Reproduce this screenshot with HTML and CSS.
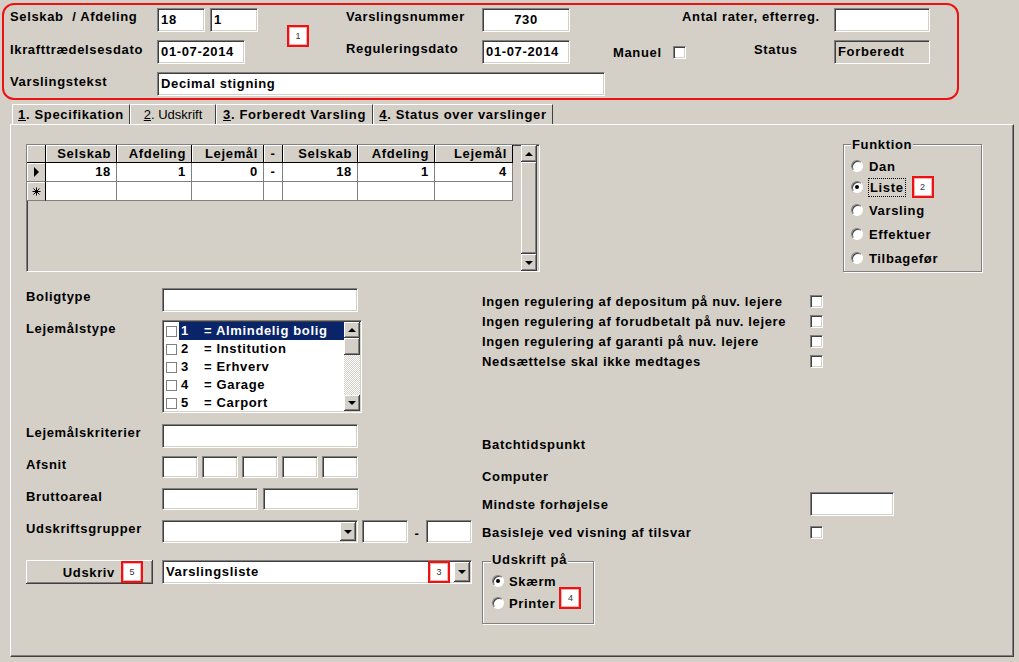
FILE: index.html
```html
<!DOCTYPE html>
<html lang="da">
<head>
<meta charset="utf-8">
<title>Varsling</title>
<link rel="stylesheet" href="styles.css">
</head>
<body>
<div class="window">
  <div class="header">
    <div class="hrow">
      <span class="lbl w147">Selskab&nbsp; / Afdeling</span>
      <span class="inp w48">18</span>
      <span class="inp w48 ml5">1</span>
      <span class="lbl w136 ml88">Varslingsnummer</span>
      <span class="inp w88 center">730</span>
      <span class="lbl w152 ml112">Antal rater, efterreg.</span>
      <span class="inp w96"></span>
    </div>
    <div class="hrow">
      <span class="lbl w147 pt1">Ikrafttrædelsesdato</span>
      <span class="inp w88">01-07-2014</span>
      <span class="lbl w136 ml101">Reguleringsdato</span>
      <span class="inp w88">01-07-2014</span>
      <span class="lbl mid w60 ml43">Manuel</span>
      <span class="chk mid"></span>
      <span class="lbl w80 ml68 pt1">Status</span>
      <span class="inp w96 disabled">Forberedt</span>
    </div>
    <div class="hrow">
      <span class="lbl w147 pt1">Varslingstekst</span>
      <span class="inp w448">Decimal stigning</span>
    </div>
    <span class="badge badge-1">1</span>
  </div>

  <div class="tabs">
    <div class="tab t1"><u>1</u>. Specifikation</div>
    <div class="tab t2"><u>2</u>. Udskrift</div>
    <div class="tab t3"><u>3</u>. Forberedt Varsling</div>
    <div class="tab t4"><u>4</u>. Status over varslinger</div>
  </div>

  <div class="panel">
    <div class="top">
      <div class="grid">
        <div class="table">
          <div class="hc"></div>
          <div class="hc">Selskab</div>
          <div class="hc">Afdeling</div>
          <div class="hc">Lejemål</div>
          <div class="hc ctr">-</div>
          <div class="hc">Selskab</div>
          <div class="hc">Afdeling</div>
          <div class="hc">Lejemål</div>

          <div class="sc"><span class="tri"></span></div>
          <div class="dc">18</div>
          <div class="dc">1</div>
          <div class="dc">0</div>
          <div class="dc ctr">-</div>
          <div class="dc">18</div>
          <div class="dc">1</div>
          <div class="dc">4</div>

          <div class="sc">
            <svg width="9" height="9" viewBox="0 0 9 9"><path d="M4.5 0.5V8.5M0.5 4.5H8.5M1.5 1.5L7.5 7.5M7.5 1.5L1.5 7.5" stroke="#000" stroke-width="1" fill="none"/></svg>
          </div>
          <div class="dc"></div>
          <div class="dc"></div>
          <div class="dc"></div>
          <div class="dc"></div>
          <div class="dc"></div>
          <div class="dc"></div>
          <div class="dc"></div>
        </div>
        <div class="vscroll">
          <div class="sbtn raised"><span class="up"></span></div>
          <div class="thumb raised"></div>
          <div class="sbtn raised"><span class="down"></span></div>
        </div>
      </div>

      <div class="group funktion">
        <span class="legend">Funktion</span>
        <div class="opt h20 first"><span class="radio"></span><span>Dan</span></div>
        <div class="opt h22"><span class="radio tight"></span><span class="focus">Liste</span><span class="badge ml6">2</span></div>
        <div class="opt h24"><span class="radio"></span><span>Varsling</span></div>
        <div class="opt h24"><span class="radio"></span><span>Effektuer</span></div>
        <div class="opt h24"><span class="radio"></span><span>Tilbagefør</span></div>
      </div>
    </div>

    <div class="body">
      <div class="left">
        <div class="frow">
          <span class="flbl">Boligtype</span>
          <span class="inp w196"></span>
        </div>
        <div class="frow mt8">
          <span class="flbl">Lejemålstype</span>
          <div class="listbox">
            <div class="items">
              <div class="item sel"><span class="ibox"></span><span class="itext"><span class="num">1</span>= Almindelig bolig</span></div>
              <div class="item"><span class="ibox"></span><span class="itext"><span class="num">2</span>= Institution</span></div>
              <div class="item"><span class="ibox"></span><span class="itext"><span class="num">3</span>= Erhverv</span></div>
              <div class="item"><span class="ibox"></span><span class="itext"><span class="num">4</span>= Garage</span></div>
              <div class="item"><span class="ibox"></span><span class="itext"><span class="num">5</span>= Carport</span></div>
            </div>
            <div class="lscroll">
              <div class="lbtn raised"><span class="up"></span></div>
              <div class="lthumb raised"></div>
              <div class="track"></div>
              <div class="lbtn raised"><span class="down"></span></div>
            </div>
          </div>
        </div>
        <div class="frow mt11">
          <span class="flbl">Lejemålskriterier</span>
          <span class="inp w196"></span>
        </div>
        <div class="frow mt8">
          <span class="flbl">Afsnit</span>
          <span class="inp h22 w36"></span>
          <span class="inp h22 w36 ml4"></span>
          <span class="inp h22 w36 ml4"></span>
          <span class="inp h22 w36 ml4"></span>
          <span class="inp h22 w36 ml4"></span>
        </div>
        <div class="frow mt10">
          <span class="flbl">Bruttoareal</span>
          <span class="inp h22 w96"></span>
          <span class="inp h22 w96 ml5"></span>
        </div>
        <div class="frow mt10">
          <span class="flbl">Udskriftsgrupper</span>
          <div class="combo w196 h23">
            <span class="ctext"></span>
            <span class="dbtn raised"><span class="down"></span></span>
          </div>
          <span class="inp h23 w46 ml4"></span>
          <span class="dash">-</span>
          <span class="inp h23 w46"></span>
        </div>
        <div class="frow mt17">
          <div class="btn raised"><span>Udskriv</span><span class="badge ml6">5</span></div>
          <div class="combo w310 h24 ml9">
            <span class="ctext">Varslingsliste</span>
            <span class="badge cbadge">3</span>
            <span class="dbtn raised"><span class="down"></span></span>
          </div>
        </div>
      </div>

      <div class="right">
        <div class="crow"><span class="rlbl">Ingen regulering af depositum på nuv. lejere</span><span class="chk"></span></div>
        <div class="crow"><span class="rlbl">Ingen regulering af forudbetalt på nuv. lejere</span><span class="chk"></span></div>
        <div class="crow"><span class="rlbl">Ingen regulering af garanti på nuv. lejere</span><span class="chk"></span></div>
        <div class="crow"><span class="rlbl">Nedsættelse skal ikke medtages</span><span class="chk"></span></div>
        <div class="crow mt63"><span class="rlbl">Batchtidspunkt</span></div>
        <div class="crow mt12"><span class="rlbl">Computer</span></div>
        <div class="crow h24 mt6"><span class="rlbl">Mindste forhøjelse</span><span class="inp w84"></span></div>
        <div class="crow mt6"><span class="rlbl">Basisleje ved visning af tilsvar</span><span class="chk"></span></div>
        <div class="group udskrift">
          <span class="legend">Udskrift på</span>
          <div class="opt h22 first2"><span class="radio on sm"></span><span>Skærm</span></div>
          <div class="opt h22"><span class="radio sm"></span><span>Printer</span><span class="badge b4">4</span></div>
        </div>
      </div>
    </div>
  </div>
</div>
</body>
</html>
```

FILE: styles.css
```css
* { box-sizing: border-box; }
html, body { margin: 0; }
body {
  background: #d4d0c8;
  font-family: "Liberation Sans", Arial, sans-serif;
  font-size: 13px;
  font-weight: bold;
  letter-spacing: .65px;
  color: #000;
}
.window { width: 1019px; height: 662px; overflow: hidden; padding-top: 3px; }

/* header */
.header {
  position: relative;
  margin-left: 2px;
  width: 957px;
  height: 97px;
  border: 2px solid #ee1111;
  border-radius: 12px;
  padding: 3px 0 0 6px;
  display: flex;
  flex-direction: column;
  gap: 8px;
}
.hrow { display: flex; align-items: flex-start; height: 24px; }
.lbl { flex: none; line-height: 17px; white-space: nowrap; }
.pt1 { padding-top: 1px; }
.mid { align-self: center; }

.inp {
  flex: none;
  display: block;
  height: 24px;
  background: #fff;
  border: 1px solid;
  border-color: #808080 #fff #fff #808080;
  box-shadow: inset 1px 1px #404040, inset -1px -1px #d4d0c8;
  padding: 0 3px;
  line-height: 22px;
  white-space: nowrap;
  overflow: hidden;
}
.inp.h22 { height: 22px; line-height: 20px; }
.inp.h23 { height: 23px; line-height: 21px; }
.center { text-align: center; }
.disabled { background: #d4d0c8; }

.chk {
  flex: none;
  width: 13px;
  height: 13px;
  background: #fff;
  border: 1px solid;
  border-color: #808080 #fff #fff #808080;
  box-shadow: inset 1px 1px #404040, inset -1px -1px #d4d0c8;
}

.w36 { width: 36px; } .w46 { width: 46px; } .w48 { width: 48px; } .w60 { width: 60px; }
.w80 { width: 80px; } .w84 { width: 84px; } .w88 { width: 88px; } .w96 { width: 96px; }
.w136 { width: 136px; } .w147 { width: 147px; } .w152 { width: 152px; } .w196 { width: 196px; }
.w310 { width: 310px; } .w448 { width: 448px; }
.ml4 { margin-left: 4px; } .ml5 { margin-left: 5px; } .ml6 { margin-left: 6px; } .ml9 { margin-left: 9px; }
.ml43 { margin-left: 43px; } .ml68 { margin-left: 68px; } .ml88 { margin-left: 88px; }
.ml101 { margin-left: 101px; } .ml112 { margin-left: 112px; }
.mt6 { margin-top: 6px; } .mt8 { margin-top: 8px; } .mt10 { margin-top: 10px; } .mt11 { margin-top: 11px; }
.mt12 { margin-top: 12px; } .mt17 { margin-top: 17px; } .mt63 { margin-top: 63px; }

/* annotation badges */
.badge {
  flex: none;
  display: block;
  width: 22px;
  height: 22px;
  background: #fff;
  border: 2px solid #ee1111;
  box-shadow: inset 0 0 0 1px #ffb0b0;
  font: normal 9px/18px "Liberation Sans", Arial, sans-serif;
  letter-spacing: 0;
  color: #333;
  text-align: center;
}
.badge-1 { position: absolute; left: 283px; top: 20px; }

/* raised 3d */
.raised {
  background: #d4d0c8;
  box-shadow: inset -1px -1px #404040, inset 1px 1px #fff, inset -2px -2px #808080;
}
.up { width: 0; height: 0; border-left: 4px solid transparent; border-right: 4px solid transparent; border-bottom: 4px solid #000; }
.down { width: 0; height: 0; border-left: 4px solid transparent; border-right: 4px solid transparent; border-top: 4px solid #000; }

/* tabs */
.tabs { display: flex; margin: 4px 0 0 12px; height: 20px; }
.tab {
  flex: none;
  height: 20px;
  border-top: 1px solid #fff;
  border-left: 1px solid #fff;
  border-right: 1px solid #404040;
  text-align: center;
  line-height: 18px;
  padding-top: 1px;
  white-space: nowrap;
}
.t1 { width: 118px; }
.t2 { width: 86px; font-weight: normal; letter-spacing: 0; }
.t3 { width: 157px; }
.t4 { width: 180px; }

/* panel */
.panel {
  margin-left: 10px;
  width: 1004px;
  height: 533px;
  border-left: 1px solid #fff;
  border-top: 1px solid #fff;
  border-right: 1px solid #404040;
  border-bottom: 1px solid #404040;
  box-shadow: inset -1px -1px #808080;
  padding: 19px 0 0 15px;
}
.top { display: flex; align-items: flex-start; height: 128px; }

/* datagrid */
.grid {
  flex: none;
  width: 514px;
  height: 128px;
  display: flex;
  align-items: flex-start;
  background: #d4d0c8;
  border: 1px solid;
  border-color: #808080 #fff #fff #808080;
  box-shadow: inset 1px 1px #404040;
}
.table {
  display: grid;
  grid-template-columns: 19px 71px 75px 72px 19px 75px 77px 78px;
  grid-template-rows: 18px 19px 19px;
}
.hc {
  background: #d4d0c8;
  border-right: 1px solid #000;
  border-bottom: 1px solid #000;
  box-shadow: inset 1px 1px #fff;
  text-align: right;
  padding-right: 5px;
  line-height: 17px;
  white-space: nowrap;
}
.dc {
  background: #fff;
  border-right: 1px solid #808080;
  border-bottom: 1px solid #808080;
  text-align: right;
  padding-right: 5px;
  line-height: 18px;
}
.hc.ctr, .dc.ctr { text-align: center; padding: 0; }
.sc {
  background: #d4d0c8;
  border-right: 1px solid #000;
  border-bottom: 1px solid #808080;
  box-shadow: inset 1px 1px #fff;
  display: flex;
  align-items: center;
  justify-content: center;
}
.tri { width: 0; height: 0; border-left: 5px solid #000; border-top: 5px solid transparent; border-bottom: 5px solid transparent; }
.vscroll { flex: none; margin-left: 8px; width: 16px; height: 126px; display: flex; flex-direction: column; }
.sbtn { flex: none; height: 17px; display: flex; align-items: center; justify-content: center; }
.thumb { flex: 1; }

/* group boxes */
.group {
  flex: none;
  display: flex;
  flex-direction: column;
  border: 1px solid #808080;
  box-shadow: inset 1px 1px #fff, 1px 1px #fff;
}
.legend {
  align-self: flex-start;
  background: #d4d0c8;
  line-height: 14px;
  padding: 0 1px;
  white-space: nowrap;
}
.funktion { margin-left: 303px; width: 139px; height: 128px; padding-left: 7px; }
.funktion .legend { margin-top: -7px; }
.opt { flex: none; display: flex; align-items: center; white-space: nowrap; }
.h20 { height: 20px; } .h22 { height: 22px; } .h24 { height: 24px; }
.first { margin-top: 4px; }
.first2 { margin-top: 3px; }
.radio {
  flex: none;
  width: 12px;
  height: 12px;
  border-radius: 50%;
  background: #fff;
  border: 1px solid;
  border-color: #808080 #fff #fff #808080;
  box-shadow: inset 1px 1px #404040;
  display: flex;
  align-items: center;
  justify-content: center;
  margin-right: 6px;
}
.radio.tight { margin-right: 5px; }
.radio.sm { margin-left: 1px; margin-right: 5px; }
.radio.on::after { content: ""; width: 4px; height: 4px; border-radius: 50%; background: #000; }
.funktion .opt:nth-of-type(2) .radio::after { content: ""; width: 4px; height: 4px; border-radius: 50%; background: #000; }
.focus { border: 1px dotted #000; padding: 0 1px; line-height: 17px; }

/* body */
.body { display: flex; margin-top: 16px; }
.left { flex: none; width: 446px; display: flex; flex-direction: column; }
.frow { flex: none; display: flex; align-items: flex-start; }
.flbl { flex: none; width: 136px; line-height: 17px; white-space: nowrap; }

.listbox {
  flex: none;
  width: 200px;
  height: 93px;
  display: flex;
  background: #fff;
  border: 1px solid;
  border-color: #808080 #fff #fff #808080;
  box-shadow: inset 1px 1px #404040, inset -1px -1px #d4d0c8;
  padding: 1px;
  overflow: hidden;
}
.items { flex: 1; overflow: hidden; }
.item { display: flex; align-items: center; height: 18px; }
.ibox { flex: none; width: 11px; height: 11px; border: 1px solid #808080; background: #fff; margin: 0 2px; }
.itext { flex: 1; height: 18px; line-height: 18px; padding-left: 2px; white-space: nowrap; }
.item.sel .itext { background: #0a246a; color: #fff; }
.num { display: inline-block; width: 23px; }
.lscroll { flex: none; width: 16px; display: flex; flex-direction: column; }
.lbtn { flex: none; height: 16px; display: flex; align-items: center; justify-content: center; }
.lthumb { flex: none; height: 17px; }
.track { flex: 1; background: repeating-conic-gradient(#fff 0 25%, #d4d0c8 0 50%) 0 0 / 2px 2px; }

.combo {
  flex: none;
  display: flex;
  align-items: stretch;
  background: #fff;
  border: 1px solid;
  border-color: #808080 #fff #fff #808080;
  box-shadow: inset 1px 1px #404040, inset -1px -1px #d4d0c8;
  padding: 1px;
}
.combo.h23 { height: 23px; }
.combo.h24 { height: 24px; }
.ctext { flex: 1; padding-left: 2px; line-height: 20px; white-space: nowrap; }
.dbtn { flex: none; width: 16px; display: flex; align-items: center; justify-content: center; }
.cbadge { align-self: center; margin: -1px 4px; }
.dash { flex: none; width: 18px; text-align: center; line-height: 17px; padding-top: 5px; }

.btn {
  flex: none;
  width: 127px;
  height: 24px;
  display: flex;
  align-items: center;
  justify-content: flex-end;
  padding-right: 10px;
}

.right { flex: none; margin-left: 10px; width: 412px; display: flex; flex-direction: column; padding-top: 3px; }
.crow { flex: none; display: flex; align-items: center; height: 20px; }
.crow.h24 { height: 24px; }
.rlbl { flex: none; width: 328px; white-space: nowrap; }

.udskrift { margin-top: 19px; width: 112px; height: 63px; padding-left: 8px; }
.udskrift .legend { margin-top: -9px; }
.b4 { align-self: flex-start; margin: -5px 0 0 4px; }
```
